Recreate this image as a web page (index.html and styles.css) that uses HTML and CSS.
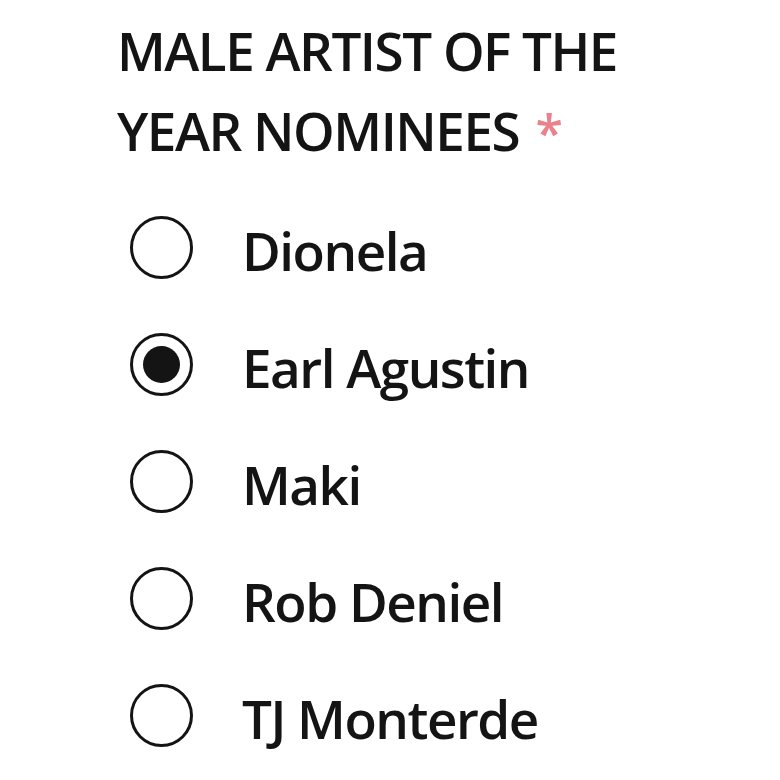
FILE: index.html
```html
<!DOCTYPE html>
<html lang="en">
<head>
  <meta charset="UTF-8">
  <meta name="viewport" content="width=device-width, initial-scale=1.0">
  <title>Male Artist of the Year</title>
  <link rel="stylesheet" href="styles.css">
</head>
<body>
  <div class="pregunta">
    <h2>MALE ARTIST OF THE YEAR NOMINEES <span class="requerido">*</span></h2>

    <div class="opciones">
      <label class="opcion">
        <input type="radio" name="male-artist" value="dionela">
        <span class="circulo"></span>
        <span class="nombre">Dionela</span>
      </label>
      <label class="opcion">
        <input type="radio" name="male-artist" value="earl" checked>
        <span class="circulo"></span>
        <span class="nombre">Earl Agustin</span>
      </label>
      <label class="opcion">
        <input type="radio" name="male-artist" value="maki">
        <span class="circulo"></span>
        <span class="nombre">Maki</span>
      </label>
      <label class="opcion">
        <input type="radio" name="male-artist" value="rob">
        <span class="circulo"></span>
        <span class="nombre">Rob Deniel</span>
      </label>
      <label class="opcion">
        <input type="radio" name="male-artist" value="tj">
        <span class="circulo"></span>
        <span class="nombre">TJ Monterde</span>
      </label>
    </div>
  </div>
</body>
</html>
```

FILE: styles.css
```css
body {
  font-family: 'Open Sans', sans-serif;
  background-color: #fff;
  margin: 0;
  padding: 0;
  color: #141414;
}

.pregunta {
  padding: 11px 0 0 117px;
}

h2 {
  margin: 0;
  width: 540px;
  font-size: 53px;
  font-weight: 600;
  letter-spacing: -1.5px;
  line-height: 80px;
}

.requerido {
  color: #e8828b;
  font-size: 50px;
  letter-spacing: 0;
  margin-left: 4px;
}

.opciones {
  margin-top: 17px;
  margin-left: 13px;
}

.opcion {
  display: flex;
  align-items: center;
  height: 117px;
  cursor: pointer;
}

.opcion input {
  display: none;
}

.circulo {
  width: 57px;
  height: 57px;
  border: 3px solid #141414;
  border-radius: 50%;
  display: flex;
  align-items: center;
  justify-content: center;
  flex-shrink: 0;
}

.opcion input:checked + .circulo::after {
  content: "";
  width: 37px;
  height: 37px;
  border-radius: 50%;
  background-color: #141414;
}

.nombre {
  margin-left: 49px;
  font-size: 53px;
  font-weight: 600;
  letter-spacing: -1.5px;
  line-height: 63px;
  padding-top: 6px;
}
```
